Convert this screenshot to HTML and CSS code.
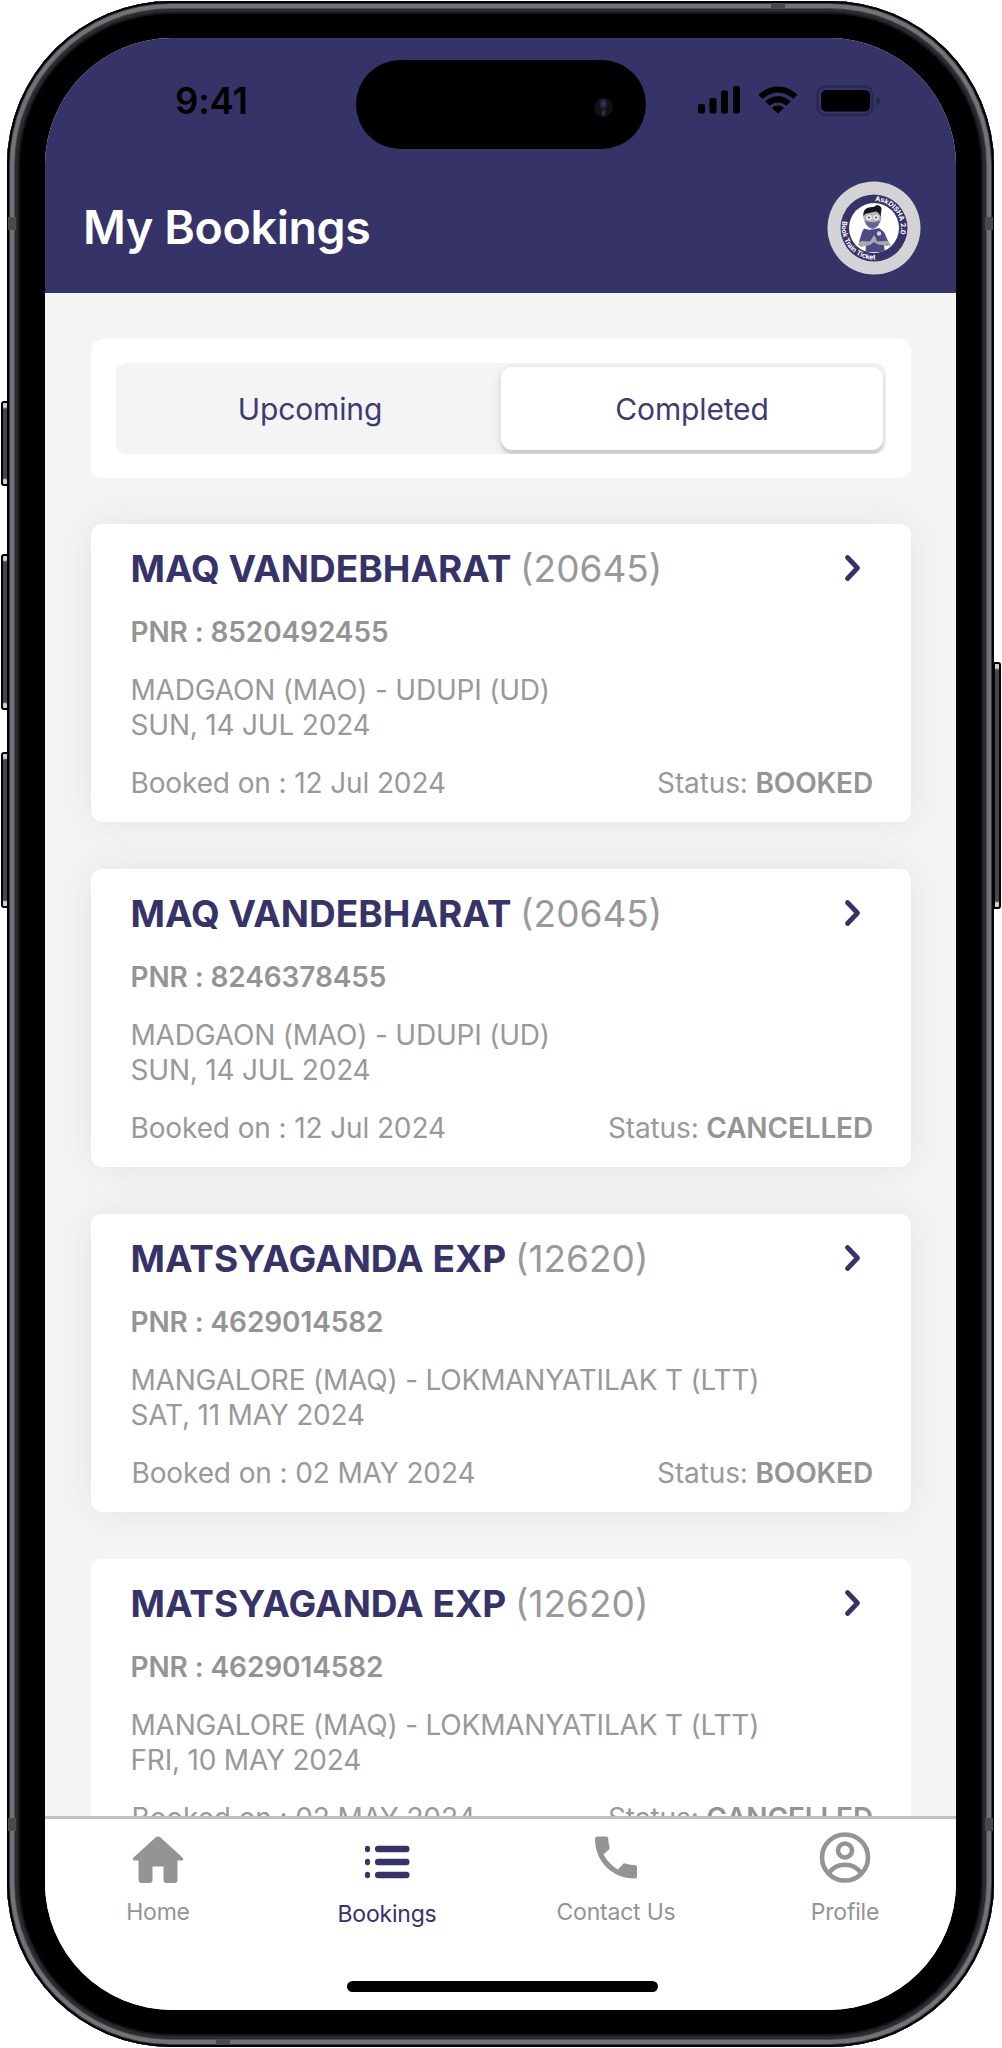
FILE: index.html
```html
<!DOCTYPE html>
<html lang="en">

<head>
    <meta charset="UTF-8">
    <meta name="viewport" content="width=device-width, initial-scale=1.0">
    <title>My Bookings</title>
    <link rel="stylesheet" href="styles.css">
</head>

<body>
    <div class="phone">
        <span class="side-btn action"></span>
        <span class="side-btn volume-up"></span>
        <span class="side-btn volume-down"></span>
        <span class="side-btn power"></span>

        <div class="frame">
            <span class="antenna left top"></span>
            <span class="antenna left bottom"></span>
            <span class="antenna right top"></span>
            <span class="antenna right bottom"></span>
            <span class="antenna-h top"></span>
            <span class="antenna-h bottom"></span>

            <div class="screen">
                <div class="island"><span class="camera"></span></div>

                <header class="header">
                    <div class="status-bar">
                        <span class="time">9:41</span>
                        <svg class="status-icons" width="184" height="34" viewBox="0 0 184 34">
                            <rect x="0" y="20" width="7" height="9.5" rx="2"/>
                            <rect x="11.5" y="14" width="7" height="15.5" rx="2"/>
                            <rect x="23" y="6.500" width="7" height="23" rx="2"/>
                            <rect x="35" y="2" width="7" height="27.500" rx="2"/>
                            <path d="M60.500 10.700C71.500-.4 88.500-.4 99.500 10.700L95.300 15C86.500 6.200 73.500 6.200 64.700 15Z"/>
                            <path d="M67.300 17.300C74.500 10.400 85.500 10.400 92.700 17.300L88.300 21.700C83.500 17.400 76.500 17.400 71.700 21.700Z"/>
                            <path d="M74 24C77.500 20.800 82.500 20.800 86 24L80 29.600Z"/>
                            <rect x="119.500" y="2.500" width="55" height="28.500" rx="8" fill="none" stroke="#000" stroke-opacity=".2" stroke-width="2.500"/>
                            <rect x="123" y="6" width="49" height="21.500" rx="5"/>
                            <path d="M178.500 12.500q3.500 1.500 3.500 4.500t-3.500 4.500z" fill-opacity=".25"/>
                        </svg>
                    </div>
                    <div class="title-bar">
                        <h1>My Bookings</h1>
                        <svg class="assistant" width="94" height="94" viewBox="0 0 94 94">
                            <defs>
                                <path id="ring-top" d="M47 20A27 27 0 0 1 74 47A27 27 0 0 1 47 74"/>
                                <path id="ring-bottom" d="M15.500 40A32 32 0 0 0 47 78.500A32 32 0 0 0 60 76"/>
                                <clipPath id="face"><circle cx="47" cy="47" r="25"/></clipPath>
                            </defs>
                            <circle cx="47" cy="47" r="46.500" fill="#d3d3d5"/>
                            <circle cx="47" cy="47" r="33.500" fill="#353368"/>
                            <circle cx="47" cy="47" r="25" fill="#fff"/>
                            <g clip-path="url(#face)">
                                <path d="M37 47.500Q42 50 52 47L57 51L62 62L60 65L57 64L58 71H38.500L39 63L34 64L32 61L35 51Z" fill="#4b4a86"/>
                                <path d="M31 64Q32 60 35 60L43 60.500L47 54Q49 56 50 60.500L58 60Q62 59 64 65L51 63.500L47 61L43 64L34 66Z" fill="#aaa9a8"/>
                                <ellipse cx="45.500" cy="37" rx="9" ry="9" fill="#b9b6b5"/>
                                <path d="M38 39.500Q45 43 53 39.500Q52 46.500 45.500 48Q39 46.500 38 39.500Z" fill="#64639c"/>
                                <path d="M36.500 36C35.500 29 39 25.500 47 26C49 23 54.500 24 54.500 28C54.500 31 53.500 32 54 36Q51.500 31 49 30.500Q41 32 38 33Z" fill="#171719"/>
                                <circle cx="42" cy="36.500" r="2.800" fill="#e8e8e8"/>
                                <circle cx="49" cy="36.500" r="2.800" fill="#e8e8e8"/>
                                <circle cx="42" cy="36.500" r="1" fill="#444"/>
                                <circle cx="49" cy="36.500" r="1" fill="#444"/>
                                <circle cx="52" cy="52.500" r="2.200" fill="#d5d5e2"/>
                            </g>
                            <text class="ring-text"><textPath href="#ring-top" startOffset="1">AskDISHA 2.0</textPath></text>
                            <text class="ring-text"><textPath href="#ring-bottom" startOffset="0">Book Train Ticket</textPath></text>
                        </svg>
                    </div>
                </header>

                <main class="content">
                    <div class="tabs-card">
                        <div class="tabs">
                            <div class="tab">Upcoming</div>
                            <div class="tab active">Completed</div>
                        </div>
                    </div>

                    <article class="booking">
                        <div class="train">
                            <h2>MAQ VANDEBHARAT <span>(20645)</span></h2>
                            <svg class="chevron" width="18" height="28" viewBox="0 0 18 28"><path d="M3.500 3.500L13.500 14L3.500 24.500"/></svg>
                        </div>
                        <p class="pnr">PNR : 8520492455</p>
                        <p class="route">MADGAON (MAO) - UDUPI (UD)<br>SUN, 14 JUL 2024</p>
                        <div class="meta"><span>Booked on : 12 Jul 2024</span><span class="status">Status: <b>BOOKED</b></span></div>
                    </article>

                    <article class="booking">
                        <div class="train">
                            <h2>MAQ VANDEBHARAT <span>(20645)</span></h2>
                            <svg class="chevron" width="18" height="28" viewBox="0 0 18 28"><path d="M3.500 3.500L13.500 14L3.500 24.500"/></svg>
                        </div>
                        <p class="pnr">PNR : 8246378455</p>
                        <p class="route">MADGAON (MAO) - UDUPI (UD)<br>SUN, 14 JUL 2024</p>
                        <div class="meta"><span>Booked on : 12 Jul 2024</span><span class="status">Status: <b>CANCELLED</b></span></div>
                    </article>

                    <article class="booking">
                        <div class="train">
                            <h2>MATSYAGANDA EXP <span>(12620)</span></h2>
                            <svg class="chevron" width="18" height="28" viewBox="0 0 18 28"><path d="M3.500 3.500L13.500 14L3.500 24.500"/></svg>
                        </div>
                        <p class="pnr">PNR : 4629014582</p>
                        <p class="route">MANGALORE (MAQ) - LOKMANYATILAK T (LTT)<br>SAT, 11 MAY 2024</p>
                        <div class="meta indent"><span>Booked on : 02 MAY 2024</span><span class="status">Status: <b>BOOKED</b></span></div>
                    </article>

                    <article class="booking flat">
                        <div class="train">
                            <h2>MATSYAGANDA EXP <span>(12620)</span></h2>
                            <svg class="chevron" width="18" height="28" viewBox="0 0 18 28"><path d="M3.500 3.500L13.500 14L3.500 24.500"/></svg>
                        </div>
                        <p class="pnr">PNR : 4629014582</p>
                        <p class="route">MANGALORE (MAQ) - LOKMANYATILAK T (LTT)<br>FRI, 10 MAY 2024</p>
                        <div class="meta indent"><span>Booked on : 02 MAY 2024</span><span class="status">Status: <b>CANCELLED</b></span></div>
                    </article>
                </main>

                <nav class="nav">
                    <div class="nav-items">
                        <a class="nav-item">
                            <svg width="56" height="56" viewBox="0 0 56 56"><path d="M28 4.500Q29.500 4.500 30.500 5.500L53 26Q54 28.500 51.500 28.500H47.500V48Q47.500 51 44.500 51H36.500Q33.500 51 33.500 48V34.500H22.500V48Q22.500 51 19.500 51H11.500Q8.500 51 8.500 48V28.500H4.500Q2 28.500 3 26L25.500 5.500Q26.500 4.500 28 4.500Z"/></svg>
                            <span>Home</span>
                        </a>
                        <a class="nav-item active">
                            <svg width="56" height="56" viewBox="0 0 56 56">
                                <ellipse cx="8.500" cy="17" rx="2.600" ry="3.300"/><ellipse cx="8.500" cy="30" rx="2.600" ry="3.300"/><ellipse cx="8.500" cy="43" rx="2.600" ry="3.300"/>
                                <rect x="16" y="13.700" width="34.500" height="6.600" rx="3"/><rect x="16" y="26.700" width="34.500" height="6.600" rx="3"/><rect x="16" y="39.700" width="34.500" height="6.600" rx="3"/>
                            </svg>
                            <span>Bookings</span>
                        </a>
                        <a class="nav-item">
                            <svg width="56" height="56" viewBox="0 0 56 56"><path d="M9 4.500H18Q20 4.500 20.200 6.500Q20.500 11 21.600 15Q22 16.500 21 17.500L15.500 22.500Q20.500 32 30 37.500L35 32Q36 31 37.500 31.500Q41.500 33 46.500 33Q49 33 49 35.500V44Q49 46.500 46.500 46.500C24 46.500 7 29 7 7Q7 4.500 9 4.500Z"/></svg>
                            <span>Contact Us</span>
                        </a>
                        <a class="nav-item">
                            <svg class="outline" width="56" height="56" viewBox="0 0 56 56"><circle cx="28" cy="25.500" r="23"/><circle cx="28" cy="18.500" r="7"/><path d="M12 41C19.500 30 36.500 30 44 41"/></svg>
                            <span>Profile</span>
                        </a>
                    </div>
                    <div class="home-indicator"></div>
                </nav>
            </div>
        </div>
    </div>
</body>

</html>
```
FILE: styles.css
```css
body {
    margin: 0;
    background: #ffffff;
    font-family: Inter, "Liberation Sans", sans-serif;
    overflow: hidden;
}

.phone {
    position: relative;
    width: 1002px;
    height: 2048px;
    box-sizing: border-box;
    padding: 1px 8px 1px 7px;
}

/* metal band, drawn as rings from the outside in */
.frame {
    position: relative;
    box-sizing: border-box;
    width: 987px;
    height: 2046px;
    padding: 37px 38px;
    border-radius: 164px;
    background: #000000;
    box-shadow:
        inset 0 0 0 2px #000000,
        inset 0 0 0 3px #3a3b3e,
        inset 0 0 0 7px #727377,
        inset 0 0 0 8px #4a4b50,
        inset 0 0 0 11px #292b2f,
        inset 0 0 0 13px #16171a;
}

.side-btn {
    position: absolute;
    left: 1px;
    width: 8px;
    box-sizing: border-box;
    border: 2px solid #000000;
    border-radius: 3px 0 0 3px;
    background: linear-gradient(#d0d0d2 0, #d0d0d2 4px, #45474b 6px, #45474b calc(100% - 6px), #d0d0d2 calc(100% - 4px));
}

.side-btn.action {
    top: 401px;
    height: 85px;
}

.side-btn.volume-up {
    top: 554px;
    height: 156px;
}

.side-btn.volume-down {
    top: 752px;
    height: 156px;
}

.side-btn.power {
    left: auto;
    right: 1px;
    top: 662px;
    height: 247px;
    border-radius: 0 3px 3px 0;
}

.antenna {
    position: absolute;
    width: 8px;
    height: 13px;
    background: #4a4a4c;
}

.antenna.left { left: 1px; }
.antenna.right { right: 1px; }
.antenna.top { top: 216px; }
.antenna.bottom { bottom: 216px; }

.antenna-h {
    position: absolute;
    width: 14px;
    height: 6px;
    background: #4a4a4c;
}

.antenna-h.top {
    top: 2px;
    right: 209px;
}

.antenna-h.bottom {
    bottom: 2px;
    left: 209px;
}

.screen {
    position: relative;
    display: flex;
    flex-direction: column;
    width: 911px;
    height: 1972px;
    border-radius: 127px;
    overflow: hidden;
    background: #f4f4f4;
}

.island {
    position: absolute;
    left: 311px;
    top: 22px;
    width: 290px;
    height: 89px;
    border-radius: 45px;
    background: #000000;
}

.camera {
    position: absolute;
    right: 33px;
    top: 38px;
    width: 19px;
    height: 19px;
    border-radius: 50%;
    background: radial-gradient(ellipse at 50% 30%, #3f3d70 0, #1b1b2c 25%, transparent 40%), radial-gradient(ellipse at 50% 78%, #35335f 0, transparent 22%), #101013;
}

.header {
    flex: none;
    height: 254.5px;
    background: #353368;
}

.status-bar {
    display: flex;
    justify-content: space-between;
    align-items: center;
    height: 126px;
    padding: 0 74px 0 130px;
}

.time {
    font-size: 36.5px;
    font-weight: 600;
    letter-spacing: -0.2px;
    color: #000000;
}

.title-bar {
    display: flex;
    justify-content: space-between;
    align-items: center;
    height: 127px;
    padding: 0 35.5px 0 38px;
}

.title-bar h1 {
    margin: 0;
    padding-bottom: 2px;
    font-size: 46.5px;
    font-weight: 600;
    letter-spacing: -0.35px;
    color: #ffffff;
}

.ring-text {
    font-size: 6.9px;
    font-weight: 700;
    fill: #ffffff;
}

.content {
    flex: 1;
    min-height: 0;
    overflow: hidden;
    padding: 46.5px 45px 0 46px;
}

.tabs-card {
    padding: 24px 25px 24px 25px;
    margin-bottom: 46px;
    border-radius: 12px;
    background: #ffffff;
}

.tabs {
    display: grid;
    grid-template-columns: 1fr 1fr;
    height: 83px;
    padding: 4px 3px 4px 3px;
    border-radius: 10px;
    background: #f4f4f4;
    overflow: hidden;
}

.tab {
    display: flex;
    align-items: center;
    justify-content: center;
    border-radius: 11px;
    font-size: 30px;
    font-weight: 400;
    letter-spacing: -0.15px;
    color: #3d3b70;
}

.tab.active {
    background: #ffffff;
    box-shadow: 0 4px 1px rgba(0, 0, 0, 0.08), 0 3px 10px rgba(0, 0, 0, 0.14);
}

.booking {
    box-sizing: border-box;
    height: 298px;
    margin-bottom: 47px;
    padding: 20px 38px 0 39.5px;
    border-radius: 11px;
    background: #ffffff;
    color: #949494;
    box-shadow: 0 0 38px rgba(0, 0, 0, 0.075);
}

.booking.flat {
    box-shadow: none;
}

.train {
    display: flex;
    justify-content: space-between;
    align-items: center;
    height: 48px;
    padding-right: 11px;
}

.train h2 {
    margin: 0;
    font-size: 37px;
    font-weight: 700;
    color: #353368;
    white-space: nowrap;
}

.train h2 span {
    font-weight: 400;
    color: #999999;
}

.chevron path {
    fill: none;
    stroke: #353368;
    stroke-width: 4.8;
    stroke-linecap: round;
    stroke-linejoin: round;
}

.pnr {
    margin: 23px 0 0;
    font-size: 28px;
    line-height: 35px;
    font-weight: 600;
    letter-spacing: -0.1px;
}

.route {
    margin: 23px 0 0;
    font-size: 28px;
    line-height: 35px;
    letter-spacing: -0.2px;
    color: #999999;
}

.meta {
    display: flex;
    justify-content: space-between;
    margin-top: 23px;
    font-size: 28px;
    line-height: 35px;
    letter-spacing: -0.12px;
    color: #999999;
}

.meta.indent {
    padding-left: 1px;
}

.meta b {
    font-weight: 600;
    letter-spacing: -0.15px;
    color: #949494;
}

.nav {
    position: relative;
    flex: none;
    height: 194px;
    box-sizing: border-box;
    border-top: 3px solid #c0c0c0;
    background: #ffffff;
}

.nav-items {
    display: grid;
    grid-template-columns: repeat(4, 229px);
    margin-left: -1.5px;
    padding-top: 13px;
}

.nav-item {
    display: flex;
    flex-direction: column;
    align-items: center;
    gap: 10px;
    font-size: 23px;
    line-height: 28px;
    letter-spacing: -0.2px;
    color: #949494;
    fill: #949494;
}

.nav-item.active {
    color: #353368;
    fill: #353368;
    gap: 12px;
}

.nav-item .outline {
    fill: none;
    stroke: #949494;
    stroke-width: 4.6;
}

.home-indicator {
    position: absolute;
    left: 301.5px;
    bottom: 18px;
    width: 311px;
    height: 11.5px;
    border-radius: 6px;
    background: #000000;
}
```
